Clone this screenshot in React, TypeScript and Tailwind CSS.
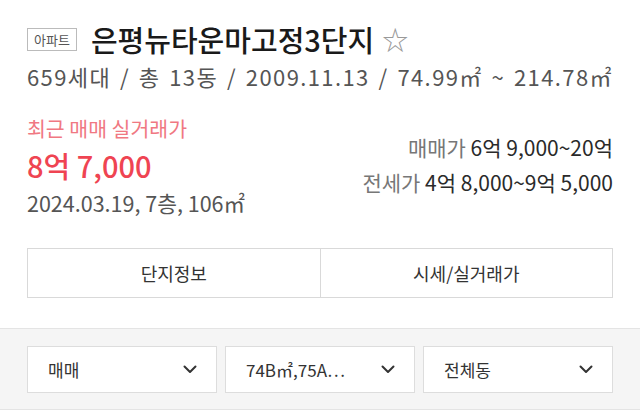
import React from "react";

const font = { fontFamily: '"Noto Sans CJK KR", "Noto Sans", sans-serif' };

function Chevron() {
  return (
    <svg width="14" height="9" viewBox="0 0 14 9" fill="none">
      <path d="M1.5 1.5 L7 7 L12.5 1.5" stroke="#333" strokeWidth="2" strokeLinecap="round" strokeLinejoin="round" />
    </svg>
  );
}

function Select({ label }: { label: string }) {
  return (
    <div className="flex h-[47px] flex-1 items-center justify-between border border-[#dddddd] bg-white pl-[20px] pr-[19px]">
      <span className="text-[17px] text-[#333]">{label}</span>
      <Chevron />
    </div>
  );
}

export default function App() {
  return (
    <div className="w-[640px] h-[417px] overflow-hidden bg-white" style={font}>
      <div className="px-[27px] pt-[19px]">
        <div className="flex h-[40px] items-center">
          <span className="border border-[#bbbbbb] px-[6px] text-[13px] leading-[21px] text-[#555]">아파트</span>
          <h1 className="ml-[14px] text-[29px] font-medium leading-[40px] text-[#1a1a1a]">은평뉴타운마고정3단지</h1>
          <span className="ml-[8px] text-[26px] leading-[40px] text-[#999]">☆</span>
        </div>
        <div className="mt-[3px] whitespace-nowrap text-[22px] leading-[28px] text-[#555] tracking-[1.4px] [word-spacing:2.5px]">
          659세대 / 총 13동 / 2009.11.13 / 74.99㎡ ~ 214.78㎡
        </div>
        <div className="mt-[25px] flex justify-between">
          <div>
            <div className="text-[20.5px] leading-[26px] text-[#f07882]">최근 매매 실거래가</div>
            <div className="mt-[7px] text-[29px] font-medium leading-[34px] text-[#ef4452]">8억 7,000</div>
            <div className="mt-[8px] text-[21.5px] leading-[26px] text-[#555]">2024.03.19, 7층, 106㎡</div>
          </div>
          <div className="pt-[19px] text-right text-[21px] leading-[26px]">
            <div>
              <span className="text-[#777]">매매가 </span>
              <span className="text-[#2a2a2a]">6억 9,000~20억</span>
            </div>
            <div className="mt-[9px]">
              <span className="text-[#777]">전세가 </span>
              <span className="text-[#2a2a2a]">4억 8,000~9억 5,000</span>
            </div>
          </div>
        </div>
        <div className="mt-[32px] flex h-[50px] border border-[#d9d9d9]">
          <div className="flex flex-1 items-center justify-center border-r border-[#d9d9d9] text-[18px] text-[#333]">단지정보</div>
          <div className="flex flex-1 items-center justify-center text-[18px] text-[#333]">시세/실거래가</div>
        </div>
      </div>
      <div className="mt-[30px] border-y border-[#e4e4e4] bg-[#f5f5f5] px-[27px] pt-[17px] pb-[16px]">
        <div className="flex gap-[8px]">
          <Select label="매매" />
          <Select label="74B㎡,75A…" />
          <Select label="전체동" />
        </div>
      </div>
    </div>
  );
}
